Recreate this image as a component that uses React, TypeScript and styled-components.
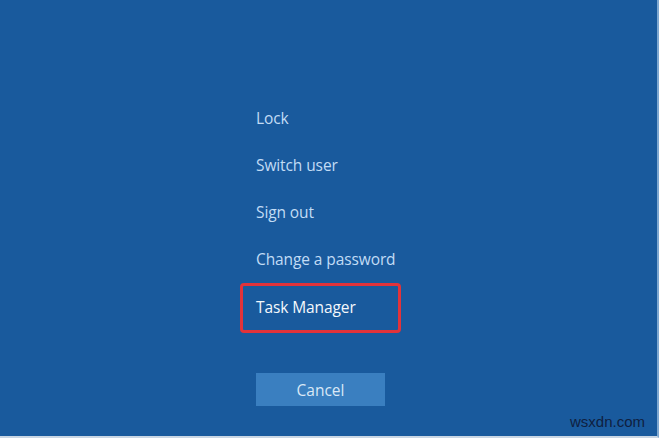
import styled, { createGlobalStyle } from "styled-components";

const GlobalStyle = createGlobalStyle`
  html, body {
    margin: 0;
    padding: 0;
    height: 100%;
  }
  body {
    background: #195a9d;
    font-family: "Open Sans", "Noto Sans", "Liberation Sans", sans-serif;
  }
`;

const Screen = styled.div`
  position: relative;
  width: 659px;
  height: 438px;
  box-sizing: border-box;
  background: #195a9d;
  border-right: 2px solid #7fa8d0;
  border-bottom: 2px solid #c9d6e4;
  overflow: hidden;
`;

const Menu = styled.div`
  display: flex;
  flex-direction: column;
  align-items: flex-start;
  padding: 94px 0 0 256px;
`;

const Item = styled.div<{ $marked?: boolean }>`
  display: flex;
  align-items: center;
  height: ${(p) => (p.$marked ? "50px" : "47px")};
  box-sizing: border-box;
  font-size: 15.5px;
  letter-spacing: -0.1px;
  color: ${(p) => (p.$marked ? "#f4f8fc" : "#c2dcf5")};
  ${(p) =>
    p.$marked &&
    `
    margin: 1px 0 0 -16px;
    width: 161px;
    padding: 0 0 3px 13px;
    border: 3px solid #e2333a;
    border-radius: 4px;
  `}
`;

const CancelButton = styled.button`
  margin-top: 40px;
  width: 129px;
  height: 33px;
  border: none;
  background: #3a7fc0;
  color: #d9e8f6;
  font-family: inherit;
  font-size: 15.5px;
  padding: 0;
`;

const Watermark = styled.div`
  position: absolute;
  right: 12px;
  bottom: 6px;
  font-family: "Liberation Sans", Arial, sans-serif;
  font-size: 15px;
  color: #0f2040;
`;

export default function App() {
  return (
    <>
      <GlobalStyle />
      <Screen>
        <Menu>
          <Item>Lock</Item>
          <Item>Switch user</Item>
          <Item>Sign out</Item>
          <Item>Change a password</Item>
          <Item $marked>Task Manager</Item>
          <CancelButton>Cancel</CancelButton>
        </Menu>
        <Watermark>wsxdn.com</Watermark>
      </Screen>
    </>
  );
}
